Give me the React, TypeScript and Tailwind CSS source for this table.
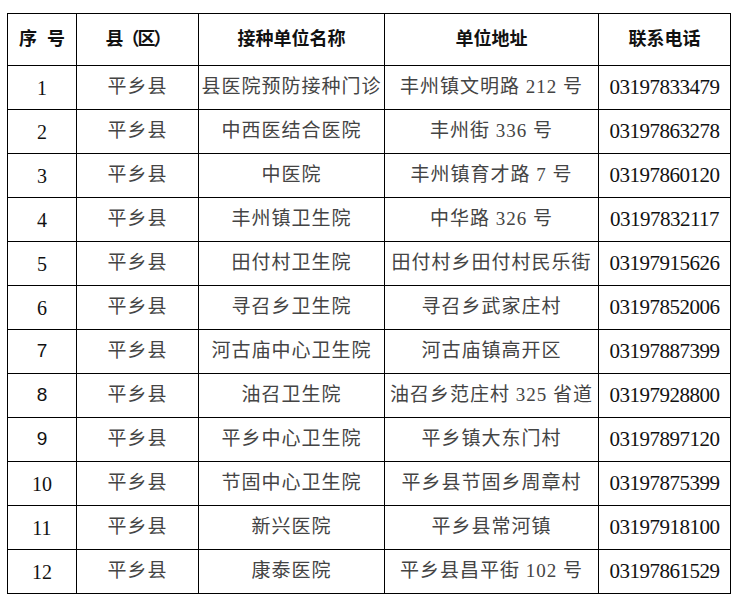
const rows: { no: string; sans?: boolean; county: string; name: string; addr: string; phone: string }[] = [
  { no: '1', county: '平乡县', name: '县医院预防接种门诊', addr: '丰州镇文明路 212 号', phone: '03197833479' },
  { no: '2', county: '平乡县', name: '中西医结合医院', addr: '丰州街 336 号', phone: '03197863278' },
  { no: '3', county: '平乡县', name: '中医院', addr: '丰州镇育才路 7 号', phone: '03197860120' },
  { no: '4', county: '平乡县', name: '丰州镇卫生院', addr: '中华路 326 号', phone: '03197832117' },
  { no: '5', county: '平乡县', name: '田付村卫生院', addr: '田付村乡田付村民乐街', phone: '03197915626' },
  { no: '6', county: '平乡县', name: '寻召乡卫生院', addr: '寻召乡武家庄村', phone: '03197852006' },
  { no: '7', sans: true, county: '平乡县', name: '河古庙中心卫生院', addr: '河古庙镇高开区', phone: '03197887399' },
  { no: '8', sans: true, county: '平乡县', name: '油召卫生院', addr: '油召乡范庄村 325 省道', phone: '03197928800' },
  { no: '9', sans: true, county: '平乡县', name: '平乡中心卫生院', addr: '平乡镇大东门村', phone: '03197897120' },
  { no: '10', county: '平乡县', name: '节固中心卫生院', addr: '平乡县节固乡周章村', phone: '03197875399' },
  { no: '11', county: '平乡县', name: '新兴医院', addr: '平乡县常河镇', phone: '03197918100' },
  { no: '12', county: '平乡县', name: '康泰医院', addr: '平乡县昌平街 102 号', phone: '03197861529' },
];

const serif = "font-['Liberation_Serif','Noto_Sans_CJK_SC',serif]";

export default function App() {
  return (
    <div className={`min-h-screen bg-white pt-[13px] pl-[7px] ${serif}`}>
      <table className="table-fixed border-collapse w-[723px] text-center">
        <colgroup>
          <col className="w-[69px]" />
          <col className="w-[122px]" />
          <col className="w-[186px]" />
          <col className="w-[214px]" />
          <col className="w-[132px]" />
        </colgroup>
        <thead>
          <tr className="h-[52px] text-[18px] font-bold text-[#111]">
            <th className="border border-black p-0">
              序<span className="inline-block w-[10px]" />号
            </th>
            <th className="border border-black p-0 tracking-[-2px]">县（区）</th>
            <th className="border border-black p-0">接种单位名称</th>
            <th className="border border-black p-0">单位地址</th>
            <th className="border border-black p-0">联系电话</th>
          </tr>
        </thead>
        <tbody>
          {rows.map((r) => (
            <tr key={r.no} className="h-[44px]">
              <td
                className={`border border-black p-0 text-[#111] ${
                  r.sans ? "font-['Liberation_Sans',sans-serif] text-[19px]" : 'text-[20px]'
                }`}
              >
                {r.no}
              </td>
              <td className="border border-black p-0 text-[19px] tracking-[1px] text-[#444]">{r.county}</td>
              <td className="border border-black p-0 text-[19px] tracking-[1px] text-[#444] whitespace-nowrap">
                {r.name}
              </td>
              <td className="border border-black p-0 text-[19px] tracking-[1px] text-[#444] whitespace-nowrap">
                {r.addr}
              </td>
              <td className="border border-black p-0 text-[21px] tracking-[-0.5px] text-[#111]">{r.phone}</td>
            </tr>
          ))}
        </tbody>
      </table>
    </div>
  );
}
